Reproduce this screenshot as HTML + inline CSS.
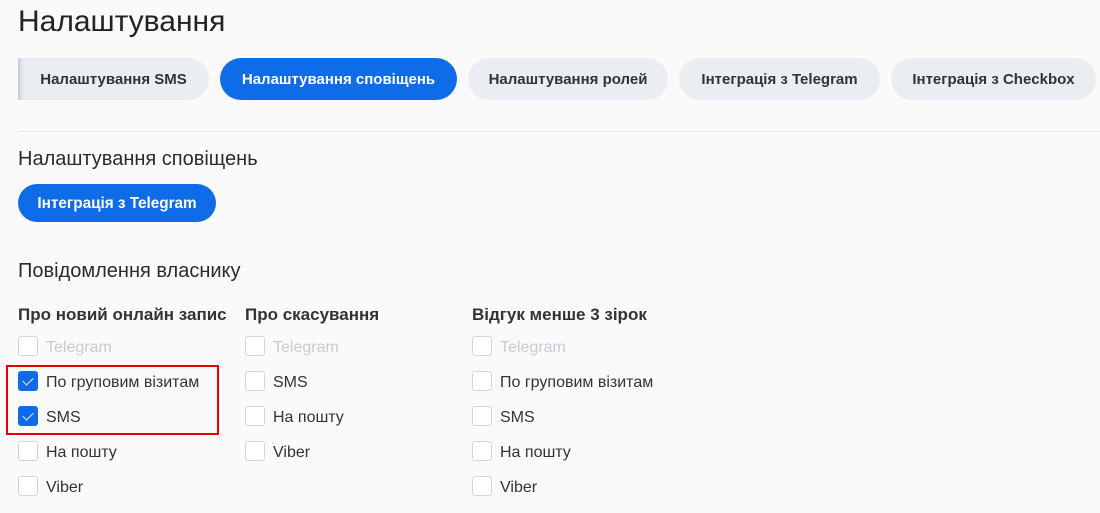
<!DOCTYPE html>
<html><head><meta charset="utf-8"><style>
*{margin:0;padding:0;box-sizing:border-box}
body{width:1100px;height:513px;overflow:hidden;background:#fafafa;font-family:"Liberation Sans",sans-serif;color:#2b2b2b;position:relative}
.a{position:absolute;white-space:nowrap}
h1{position:absolute;left:18px;top:5px;font-size:30px;font-weight:400;color:#222}
.tab{position:absolute;top:58px;height:42px;border-radius:21px;background:#eaedf2;color:#333;font-size:15px;font-weight:700;display:flex;align-items:center;justify-content:center}
.tab.on{background:#0f6ce9;color:#fff}
.line{position:absolute;left:18px;right:0;top:131px;height:1px;background:#e6e7ea}
.btn{position:absolute;left:18px;top:184px;width:198px;height:38px;border-radius:19px;background:#0f6ce9;color:#fff;font-size:15.3px;font-weight:700;display:flex;align-items:center;justify-content:center;padding-top:2px}
.h2{font-size:20px;color:#2b2b2b}
.h3{font-size:17px;font-weight:700;color:#333;top:305px}
.cb{position:absolute;width:20px;height:20px;border:1px solid #d3d6db;border-radius:3px;background:#fff}
.cb.on{background:#0f6ce9;border-color:#0f6ce9}
.cb.on:after{content:"";position:absolute;left:6px;top:3px;width:5px;height:9px;border:solid #e6efff;border-width:0 1.5px 1.5px 0;transform:rotate(45deg)}
.lb{position:absolute;font-size:16px;color:#333;margin-top:2px}
.lb.dis{color:#c6ccd6}
</style></head><body>
<h1>Налаштування</h1>
<div class="tab" style="left:18px;width:191px;border-radius:0 21px 21px 0;box-shadow:inset 4px 0 4px -2px #b9c6d6">Налаштування SMS</div>
<div class="tab on" style="left:220px;width:237px">Налаштування сповіщень</div>
<div class="tab" style="left:468px;width:200px">Налаштування ролей</div>
<div class="tab" style="left:679px;width:201px">Інтеграція з Telegram</div>
<div class="tab" style="left:891px;width:205px">Інтеграція з Checkbox</div>
<div class="line"></div>
<div class="a h2" style="left:18px;top:148px">Налаштування сповіщень</div>
<div class="btn">Інтеграція з Telegram</div>
<div class="a h2" style="left:18px;top:260px">Повідомлення власнику</div>
<div class="a h3" style="left:18px">Про новий онлайн запис</div>
<div class="a h3" style="left:245px">Про скасування</div>
<div class="a h3" style="left:472px">Відгук менше 3 зірок</div>

<div class="cb" style="left:18px;top:336px"></div><div class="lb dis" style="left:46px;top:337px">Telegram</div>
<div class="cb on" style="left:18px;top:371px"></div><div class="lb" style="left:46px;top:372px">По груповим візитам</div>
<div class="cb on" style="left:18px;top:406px"></div><div class="lb" style="left:46px;top:407px">SMS</div>
<div class="cb" style="left:18px;top:441px"></div><div class="lb" style="left:46px;top:442px">На пошту</div>
<div class="cb" style="left:18px;top:476px"></div><div class="lb" style="left:46px;top:477px">Viber</div>

<div class="cb" style="left:245px;top:336px"></div><div class="lb dis" style="left:273px;top:337px">Telegram</div>
<div class="cb" style="left:245px;top:371px"></div><div class="lb" style="left:273px;top:372px">SMS</div>
<div class="cb" style="left:245px;top:406px"></div><div class="lb" style="left:273px;top:407px">На пошту</div>
<div class="cb" style="left:245px;top:441px"></div><div class="lb" style="left:273px;top:442px">Viber</div>

<div class="cb" style="left:472px;top:336px"></div><div class="lb dis" style="left:500px;top:337px">Telegram</div>
<div class="cb" style="left:472px;top:371px"></div><div class="lb" style="left:500px;top:372px">По груповим візитам</div>
<div class="cb" style="left:472px;top:406px"></div><div class="lb" style="left:500px;top:407px">SMS</div>
<div class="cb" style="left:472px;top:441px"></div><div class="lb" style="left:500px;top:442px">На пошту</div>
<div class="cb" style="left:472px;top:476px"></div><div class="lb" style="left:500px;top:477px">Viber</div>

<div style="position:absolute;left:6px;top:365px;width:213px;height:70px;border:2px solid #e8000b"></div>
</body></html>
